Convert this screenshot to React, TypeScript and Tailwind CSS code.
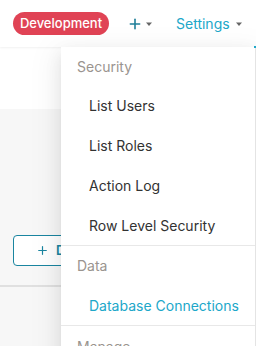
import { Plus } from "lucide-react";

function Caret({ gap }: { gap: string }) {
  return (
    <svg width="8" height="8" viewBox="0 0 8 8" className={gap}>
      <path d="M1 2.5h6L4 6z" fill="#666" />
    </svg>
  );
}

function MenuHeader({ children, h }: { children: string; h: string }) {
  return (
    <div className={`${h} flex items-center pl-[16px] text-[14px] text-[#9a948f]`}>
      {children}
    </div>
  );
}

function MenuItem({ children, active }: { children: string; active?: boolean }) {
  return (
    <div
      className={`h-[40px] flex items-center pl-[28px] text-[14px] ${
        active ? "text-[#20a7c9]" : "text-[#323232]"
      }`}
    >
      {children}
    </div>
  );
}

export default function App() {
  return (
    <div
      className="relative w-[256px] h-[346px] overflow-hidden bg-white"
      style={{ fontFamily: "Inter, 'Liberation Sans', sans-serif" }}
    >
      <header className="h-[47px] flex items-center bg-white relative z-10 shadow-[0_1px_2px_rgba(0,0,0,0.06)]">
        <span className="ml-[13px] h-[23px] w-[96px] rounded-full bg-[#e04355] text-white text-[13px] font-medium flex items-center justify-center">
          Development
        </span>
        <div className="ml-[18px] flex items-center">
          <Plus size={16} strokeWidth={2.4} color="#1f7f99" />
          <Caret gap="ml-[2px]" />
        </div>
        <div className="ml-[23px] flex items-center text-[14px] text-[#20a7c9]">
          Settings
          <Caret gap="ml-[5px]" />
        </div>
      </header>

      <div className="flex flex-col">
        <div className="h-[62px] bg-white" />
        <div className="h-[176px] bg-[#f7f7f7] flex items-end pl-[13px]">
          <button className="mb-[19px] h-[31px] w-[120px] rounded-[4px] border border-[#1a85a0] bg-white flex items-center pl-[22px] gap-[7px] text-[#1a85a0] text-[13px] font-semibold">
            <Plus size={13} strokeWidth={2.2} />
            DATABASE
          </button>
        </div>
        <div className="h-[2px] bg-[#e0e0e0]" />
        <div className="h-[70px] bg-[#f7f7f7]" />
      </div>

      <div className="absolute top-[47px] left-[61px] w-[195px] bg-white border-r border-[#e4e4e4] z-20 shadow-[0_3px_6px_-4px_rgba(0,0,0,0.12),0_6px_16px_0_rgba(0,0,0,0.08),0_9px_28px_8px_rgba(0,0,0,0.05)]">
        <div className="absolute -top-px right-[-1px] w-[2px] h-[2px] bg-[#20a7c9]" />
        <MenuHeader h="h-[38px]">Security</MenuHeader>
        <MenuItem>List Users</MenuItem>
        <MenuItem>List Roles</MenuItem>
        <MenuItem>Action Log</MenuItem>
        <MenuItem>Row Level Security</MenuItem>
        <div className="h-px bg-[#e8e8e8]" />
        <MenuHeader h="h-[39px]">Data</MenuHeader>
        <MenuItem active>Database Connections</MenuItem>
        <div className="h-px bg-[#e8e8e8]" />
        <MenuHeader h="h-[40px]">Manage</MenuHeader>
      </div>
    </div>
  );
}
